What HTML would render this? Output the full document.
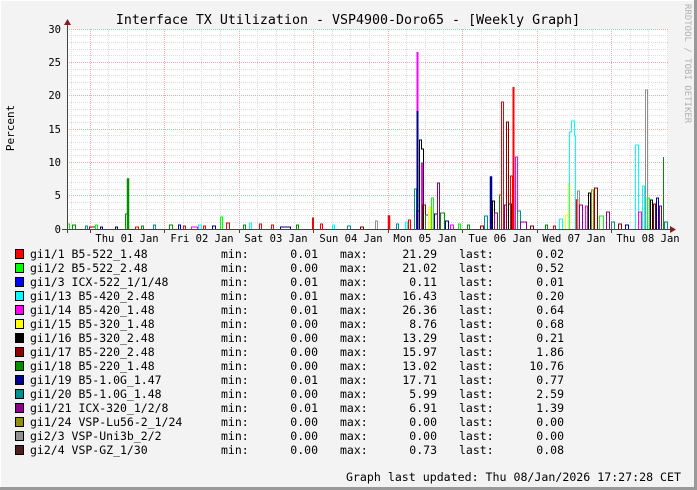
<!DOCTYPE html>
<html><head><meta charset="utf-8"><style>
html,body{margin:0;padding:0;background:#f3f3f3}
svg{display:block}
text{font-family:"DejaVu Sans Mono","Liberation Mono",monospace;fill:#000}
</style></head><body>
<svg width="697" height="490" viewBox="0 0 697 490" xmlns="http://www.w3.org/2000/svg">
<rect x="0" y="0" width="697" height="490" fill="#f3f3f3"/>
<line x1="0" y1="0.5" x2="697" y2="0.5" stroke="#fff"/>
<line x1="0.5" y1="0" x2="0.5" y2="490" stroke="#fff"/>
<line x1="0" y1="488.5" x2="697" y2="488.5" stroke="#999" stroke-width="3"/>
<line x1="695.5" y1="0" x2="695.5" y2="490" stroke="#999" stroke-width="3"/>
<rect x="67" y="29" width="601" height="200" fill="#fff"/>
<g stroke="#ddd" stroke-width="1" stroke-dasharray="1,1">
<line x1="67" x2="668" y1="222.5" y2="222.5"/><line x1="67" x2="668" y1="215.5" y2="215.5"/><line x1="67" x2="668" y1="209.5" y2="209.5"/><line x1="67" x2="668" y1="202.5" y2="202.5"/>
<line x1="67" x2="668" y1="189.5" y2="189.5"/><line x1="67" x2="668" y1="182.5" y2="182.5"/><line x1="67" x2="668" y1="175.5" y2="175.5"/><line x1="67" x2="668" y1="169.5" y2="169.5"/>
<line x1="67" x2="668" y1="155.5" y2="155.5"/><line x1="67" x2="668" y1="149.5" y2="149.5"/><line x1="67" x2="668" y1="142.5" y2="142.5"/><line x1="67" x2="668" y1="135.5" y2="135.5"/>
<line x1="67" x2="668" y1="122.5" y2="122.5"/><line x1="67" x2="668" y1="115.5" y2="115.5"/><line x1="67" x2="668" y1="109.5" y2="109.5"/><line x1="67" x2="668" y1="102.5" y2="102.5"/>
<line x1="67" x2="668" y1="89.5" y2="89.5"/><line x1="67" x2="668" y1="82.5" y2="82.5"/><line x1="67" x2="668" y1="75.5" y2="75.5"/><line x1="67" x2="668" y1="69.5" y2="69.5"/>
<line x1="67" x2="668" y1="55.5" y2="55.5"/><line x1="67" x2="668" y1="49.5" y2="49.5"/><line x1="67" x2="668" y1="42.5" y2="42.5"/><line x1="67" x2="668" y1="35.5" y2="35.5"/>
<line y1="29" y2="229" x1="71.5" x2="71.5"/><line y1="29" y2="229" x1="108.5" x2="108.5"/><line y1="29" y2="229" x1="127.5" x2="127.5"/><line y1="29" y2="229" x1="146.5" x2="146.5"/>
<line y1="29" y2="229" x1="183.5" x2="183.5"/><line y1="29" y2="229" x1="201.5" x2="201.5"/><line y1="29" y2="229" x1="220.5" x2="220.5"/>
<line y1="29" y2="229" x1="257.5" x2="257.5"/><line y1="29" y2="229" x1="276.5" x2="276.5"/><line y1="29" y2="229" x1="294.5" x2="294.5"/>
<line y1="29" y2="229" x1="332.5" x2="332.5"/><line y1="29" y2="229" x1="350.5" x2="350.5"/><line y1="29" y2="229" x1="369.5" x2="369.5"/>
<line y1="29" y2="229" x1="406.5" x2="406.5"/><line y1="29" y2="229" x1="425.5" x2="425.5"/><line y1="29" y2="229" x1="443.5" x2="443.5"/>
<line y1="29" y2="229" x1="481.5" x2="481.5"/><line y1="29" y2="229" x1="499.5" x2="499.5"/><line y1="29" y2="229" x1="518.5" x2="518.5"/>
<line y1="29" y2="229" x1="555.5" x2="555.5"/><line y1="29" y2="229" x1="574.5" x2="574.5"/><line y1="29" y2="229" x1="592.5" x2="592.5"/>
<line y1="29" y2="229" x1="630.5" x2="630.5"/><line y1="29" y2="229" x1="648.5" x2="648.5"/><line y1="29" y2="229" x1="667.5" x2="667.5"/>
</g>
<g stroke="#f4a8a8" stroke-width="1" stroke-dasharray="1,1">
<line x1="67" x2="668" y1="195.5" y2="195.5"/><line x1="67" x2="668" y1="162.5" y2="162.5"/><line x1="67" x2="668" y1="129.5" y2="129.5"/><line x1="67" x2="668" y1="95.5" y2="95.5"/><line x1="67" x2="668" y1="62.5" y2="62.5"/><line x1="67" x2="668" y1="29.5" y2="29.5"/>
<line y1="29" y2="229" x1="90.5" x2="90.5"/><line y1="29" y2="229" x1="164.5" x2="164.5"/><line y1="29" y2="229" x1="239.5" x2="239.5"/><line y1="29" y2="229" x1="313.5" x2="313.5"/><line y1="29" y2="229" x1="388.5" x2="388.5"/><line y1="29" y2="229" x1="462.5" x2="462.5"/><line y1="29" y2="229" x1="537.5" x2="537.5"/><line y1="29" y2="229" x1="611.5" x2="611.5"/>
</g>
<g fill="none" stroke-width="1">
<path d="M67.5,229V224H69.5V229" stroke="#00ff00"/>
<path d="M72.5,229V225H75.5V229" stroke="#009000"/>
<path d="M85.5,229V226H87.5V229" stroke="#009090"/>
<path d="M89.5,229V227H95.5V229" stroke="#900000"/>
<path d="M95.5,229V225H97.5V229" stroke="#00ff00"/>
<path d="M100.5,229V227H102.5V229" stroke="#000090"/>
<path d="M115.5,229V227H117.5V229" stroke="#000090"/>
<path d="M125.5,229V214H127.5V229" stroke="#009000"/>
<path d="M127.5,229V179H128.5V229" stroke="#009000" stroke-width="1.5"/>
<path d="M135.5,229V227H138.5V229" stroke="#ff0000"/>
<path d="M141.5,229V226H143.5V229" stroke="#009000"/>
<path d="M153.5,229V225H155.5V229" stroke="#009090"/>
<path d="M169.5,229V225H172.5V229" stroke="#009000"/>
<path d="M178.5,229V225H180.5V229" stroke="#000090"/>
<path d="M183.5,229V226H185.5V229" stroke="#ff0000"/>
<path d="M191.5,229V227H197.5V229" stroke="#ff00ff"/>
<path d="M198.5,229V225H201.5V229" stroke="#00ffff"/>
<path d="M203.5,229V226H205.5V229" stroke="#ff0000"/>
<path d="M212.5,229V226H215.5V229" stroke="#000090"/>
<path d="M220.5,229V217H222.5V229" stroke="#00ff00"/>
<path d="M226.5,229V223H229.5V229" stroke="#ff0000"/>
<path d="M243.5,229V225H245.5V229" stroke="#009000"/>
<path d="M249.5,229V223H251.5V229" stroke="#00ffff"/>
<path d="M259.5,229V224H261.5V229" stroke="#ff0000"/>
<path d="M271.5,229V225H273.5V229" stroke="#ff0000"/>
<path d="M280.5,229V227H290.5V229" stroke="#000090"/>
<path d="M296.5,229V225H298.5V229" stroke="#009000"/>
<path d="M312.5,229V218H313.5V229" stroke="#ff0000"/>
<path d="M320.5,229V224H322.5V229" stroke="#ff0000"/>
<path d="M332.5,229V225H334.5V229" stroke="#00ffff"/>
<path d="M347.5,229V226H350.5V229" stroke="#009090"/>
<path d="M360.5,229V227H363.5V229" stroke="#900000"/>
<path d="M375.5,229V221H377.5V229" stroke="#909090"/>
<path d="M388.5,229V216H389.5V229" stroke="#ff0000" stroke-width="1.5"/>
<path d="M396.5,229V224H398.5V229" stroke="#009090"/>
<path d="M405.5,229V222H407.5V229" stroke="#00ffff"/>
<path d="M408.5,229V220H410.5V229" stroke="#ff0000"/>
<path d="M414.5,229V189H416.5V229" stroke="#009090"/>
<path d="M416.5,229V211H419.5V229" stroke="#900090"/>
<path d="M417.5,229V52" stroke="#ff00ff" stroke-width="2"/>
<path d="M417.5,229V111" stroke="#000090" stroke-width="2"/>
<path d="M419.5,229V140H421.5V149H423.5V229" stroke="#000000"/>
<path d="M421.5,229V163H422.5V229" stroke="#ff00ff"/>
<path d="M422.5,229V205H425.5V229" stroke="#900000"/>
<path d="M425.5,229V215H428.5V229" stroke="#009000"/>
<path d="M428.5,229V207H430.5V229" stroke="#ffff00"/>
<path d="M431.5,229V198H433.5V229" stroke="#00ff00"/>
<path d="M434.5,229V214H437.5V229" stroke="#000090"/>
<path d="M437.5,229V183H439.5V229" stroke="#900090"/>
<path d="M440.5,229V213H444.5V229" stroke="#009000"/>
<path d="M445.5,229V221H448.5V229" stroke="#000090"/>
<path d="M450.5,229V225H453.5V229" stroke="#ff00ff"/>
<path d="M458.5,229V224H460.5V229" stroke="#00ff00"/>
<path d="M467.5,229V225H469.5V229" stroke="#009000"/>
<path d="M480.5,229V226H483.5V229" stroke="#900000"/>
<path d="M484.5,229V216H487.5V229" stroke="#009090"/>
<path d="M490.5,229V177H491.5V229" stroke="#000090" stroke-width="1.5"/>
<path d="M492.5,229V201H494.5V229" stroke="#000000"/>
<path d="M494.5,229V213H497.5V229" stroke="#900090"/>
<path d="M499.5,229V195H501.5V229" stroke="#009000"/>
<path d="M501.5,229V102H503.5V229" stroke="#ff0000"/>
<path d="M504.5,229V205H506.5V229" stroke="#900090"/>
<path d="M506.5,229V122H508.5V229" stroke="#900000"/>
<path d="M508.5,229V204H511.5V229" stroke="#000000"/>
<path d="M510.5,229V176H512.5V229" stroke="#ff0000"/>
<path d="M513.5,229V87" stroke="#ff0000" stroke-width="2"/>
<path d="M515.5,229V157H517.5V229" stroke="#ff00ff"/>
<path d="M517.5,229V211H520.5V229" stroke="#009090"/>
<path d="M520.5,229V222H526.5V229" stroke="#900090"/>
<path d="M530.5,229V226H533.5V229" stroke="#900000"/>
<path d="M545.5,229V225H547.5V229" stroke="#009000"/>
<path d="M553.5,229V226H555.5V229" stroke="#ff0000"/>
<path d="M559.5,229V219H562.5V229" stroke="#00ffff"/>
<path d="M565.5,229V215H568.5V229" stroke="#ffff00"/>
<path d="M568.5,229V184H569.5V229" stroke="#ffff00" stroke-width="1.5"/>
<path d="M569.5,229V132H571.5V121H574.5V136H575.5V229" stroke="#00ffff"/>
<path d="M576.5,229V200H577.5V229" stroke="#ff0000" stroke-width="1.5"/>
<path d="M577.5,229V191H579.5V229" stroke="#909090"/>
<path d="M579.5,229V205H582.5V229" stroke="#900090"/>
<path d="M585.5,229V206H587.5V229" stroke="#ff00ff"/>
<path d="M588.5,229V193H590.5V229" stroke="#000000"/>
<path d="M591.5,229V190H593.5V229" stroke="#909000"/>
<path d="M594.5,229V188H597.5V229" stroke="#900000"/>
<path d="M599.5,229V216H603.5V229" stroke="#00ff00"/>
<path d="M606.5,229V212H609.5V229" stroke="#900090"/>
<path d="M611.5,229V222H614.5V229" stroke="#009090"/>
<path d="M618.5,229V224H621.5V229" stroke="#900000"/>
<path d="M625.5,229V225H628.5V229" stroke="#000090"/>
<path d="M635.5,229V145H638.5V229" stroke="#00ffff"/>
<path d="M638.5,229V212H641.5V229" stroke="#ff00ff"/>
<path d="M642.5,229V186H644.5V229" stroke="#00ffff"/>
<path d="M645.5,229V90H647.5V229" stroke="#909090"/>
<path d="M647.5,229V198H649.5V229" stroke="#00ff00"/>
<path d="M650.5,229V200H652.5V229" stroke="#000000"/>
<path d="M653.5,229V204H655.5V229" stroke="#900000"/>
<path d="M656.5,229V198H658.5V229" stroke="#000090"/>
<path d="M659.5,229V206H661.5V229" stroke="#900090"/>
<path d="M663.5,229V157" stroke="#009000"/>
<path d="M664.5,229V222H667.5V229" stroke="#009090"/>
</g>
<line x1="62" y1="229.5" x2="671" y2="229.5" stroke="#444"/>
<polygon points="670,226 676,229.5 670,233" fill="#7f2020"/>
<line x1="67.5" y1="233" x2="67.5" y2="24" stroke="#444"/>
<polygon points="64,25 67.5,19 71,25" fill="#7f2020"/>
<g stroke="#444"><line x1="90.5" x2="90.5" y1="229" y2="233"/><line x1="164.5" x2="164.5" y1="229" y2="233"/><line x1="239.5" x2="239.5" y1="229" y2="233"/><line x1="313.5" x2="313.5" y1="229" y2="233"/><line x1="388.5" x2="388.5" y1="229" y2="233"/><line x1="462.5" x2="462.5" y1="229" y2="233"/><line x1="537.5" x2="537.5" y1="229" y2="233"/><line x1="611.5" x2="611.5" y1="229" y2="233"/></g>
<text x="348" y="24" font-size="13.3" text-anchor="middle">Interface TX Utilization - VSP4900-Doro65 - [Weekly Graph]</text>
<g font-size="10.5" text-anchor="end">
<text x="61" y="33">30</text><text x="61" y="66">25</text><text x="61" y="99">20</text><text x="61" y="133">15</text><text x="61" y="166">10</text><text x="61" y="199">5</text><text x="61" y="233">0</text>
</g>
<g font-size="10.5" text-anchor="middle">
<text x="127" y="242">Thu 01 Jan</text><text x="202" y="242">Fri 02 Jan</text><text x="276" y="242">Sat 03 Jan</text><text x="351" y="242">Sun 04 Jan</text><text x="425" y="242">Mon 05 Jan</text><text x="500" y="242">Tue 06 Jan</text><text x="574" y="242">Wed 07 Jan</text><text x="648" y="242">Thu 08 Jan</text>
</g>
<text x="0" y="0" font-size="11" text-anchor="middle" transform="translate(14,128) rotate(-90)">Percent</text>
<text x="0" y="0" font-size="9" style="fill:#b0b0b0" transform="translate(685,4) rotate(90)">RRDTOOL / TOBI OETIKER</text>
<g stroke="#000" stroke-width="1">
<rect x="15.5" y="249.5" width="8" height="9" fill="#ff0000"/>
<rect x="15.5" y="263.5" width="8" height="9" fill="#00ff00"/>
<rect x="15.5" y="277.5" width="8" height="9" fill="#0000ff"/>
<rect x="15.5" y="291.5" width="8" height="9" fill="#00ffff"/>
<rect x="15.5" y="305.5" width="8" height="9" fill="#ff00ff"/>
<rect x="15.5" y="319.5" width="8" height="9" fill="#ffff00"/>
<rect x="15.5" y="333.5" width="8" height="9" fill="#000000"/>
<rect x="15.5" y="347.5" width="8" height="9" fill="#900000"/>
<rect x="15.5" y="361.5" width="8" height="9" fill="#009000"/>
<rect x="15.5" y="375.5" width="8" height="9" fill="#000090"/>
<rect x="15.5" y="389.5" width="8" height="9" fill="#009090"/>
<rect x="15.5" y="403.5" width="8" height="9" fill="#900090"/>
<rect x="15.5" y="417.5" width="8" height="9" fill="#909000"/>
<rect x="15.5" y="431.5" width="8" height="9" fill="#909090"/>
<rect x="15.5" y="445.5" width="8" height="9" fill="#502020"/>
</g>
<g font-size="11.5" xml:space="preserve">
<text x="30" y="258">gi1/1 B5-522_1.48</text>
<text x="30" y="272">gi1/2 B5-522_2.48</text>
<text x="30" y="286">gi1/3 ICX-522_1/1/48</text>
<text x="30" y="300">gi1/13 B5-420_2.48</text>
<text x="30" y="314">gi1/14 B5-420_1.48</text>
<text x="30" y="328">gi1/15 B5-320_1.48</text>
<text x="30" y="342">gi1/16 B5-320_2.48</text>
<text x="30" y="356">gi1/17 B5-220_2.48</text>
<text x="30" y="370">gi1/18 B5-220_1.48</text>
<text x="30" y="384">gi1/19 B5-1.0G_1.47</text>
<text x="30" y="398">gi1/20 B5-1.0G_1.48</text>
<text x="30" y="412">gi1/21 ICX-320_1/2/8</text>
<text x="30" y="426">gi1/24 VSP-Lu56-2_1/24</text>
<text x="30" y="440">gi2/3 VSP-Uni3b_2/2</text>
<text x="30" y="454">gi2/4 VSP-GZ_1/30</text>
</g>
<g font-size="11.5">
<text x="221" y="258">min:</text><text x="221" y="272">min:</text><text x="221" y="286">min:</text><text x="221" y="300">min:</text><text x="221" y="314">min:</text><text x="221" y="328">min:</text><text x="221" y="342">min:</text><text x="221" y="356">min:</text><text x="221" y="370">min:</text><text x="221" y="384">min:</text><text x="221" y="398">min:</text><text x="221" y="412">min:</text><text x="221" y="426">min:</text><text x="221" y="440">min:</text><text x="221" y="454">min:</text>
<text x="340" y="258">max:</text><text x="340" y="272">max:</text><text x="340" y="286">max:</text><text x="340" y="300">max:</text><text x="340" y="314">max:</text><text x="340" y="328">max:</text><text x="340" y="342">max:</text><text x="340" y="356">max:</text><text x="340" y="370">max:</text><text x="340" y="384">max:</text><text x="340" y="398">max:</text><text x="340" y="412">max:</text><text x="340" y="426">max:</text><text x="340" y="440">max:</text><text x="340" y="454">max:</text>
<text x="459" y="258">last:</text><text x="459" y="272">last:</text><text x="459" y="286">last:</text><text x="459" y="300">last:</text><text x="459" y="314">last:</text><text x="459" y="328">last:</text><text x="459" y="342">last:</text><text x="459" y="356">last:</text><text x="459" y="370">last:</text><text x="459" y="384">last:</text><text x="459" y="398">last:</text><text x="459" y="412">last:</text><text x="459" y="426">last:</text><text x="459" y="440">last:</text><text x="459" y="454">last:</text>
</g>
<g font-size="11.5" text-anchor="end">
<text x="318" y="258">0.01</text><text x="318" y="272">0.00</text><text x="318" y="286">0.01</text><text x="318" y="300">0.01</text><text x="318" y="314">0.01</text><text x="318" y="328">0.00</text><text x="318" y="342">0.00</text><text x="318" y="356">0.00</text><text x="318" y="370">0.00</text><text x="318" y="384">0.01</text><text x="318" y="398">0.00</text><text x="318" y="412">0.01</text><text x="318" y="426">0.00</text><text x="318" y="440">0.00</text><text x="318" y="454">0.00</text>
<text x="437" y="258">21.29</text><text x="437" y="272">21.02</text><text x="437" y="286">0.11</text><text x="437" y="300">16.43</text><text x="437" y="314">26.36</text><text x="437" y="328">8.76</text><text x="437" y="342">13.29</text><text x="437" y="356">15.97</text><text x="437" y="370">13.02</text><text x="437" y="384">17.71</text><text x="437" y="398">5.99</text><text x="437" y="412">6.91</text><text x="437" y="426">0.00</text><text x="437" y="440">0.00</text><text x="437" y="454">0.73</text>
<text x="564" y="258">0.02</text><text x="564" y="272">0.52</text><text x="564" y="286">0.01</text><text x="564" y="300">0.20</text><text x="564" y="314">0.64</text><text x="564" y="328">0.68</text><text x="564" y="342">0.21</text><text x="564" y="356">1.86</text><text x="564" y="370">10.76</text><text x="564" y="384">0.77</text><text x="564" y="398">2.59</text><text x="564" y="412">1.39</text><text x="564" y="426">0.00</text><text x="564" y="440">0.00</text><text x="564" y="454">0.08</text>
<text x="681" y="481" font-size="11.6">Graph last updated: Thu 08/Jan/2026 17:27:28 CET</text>
</g>
</svg>
</body></html>
